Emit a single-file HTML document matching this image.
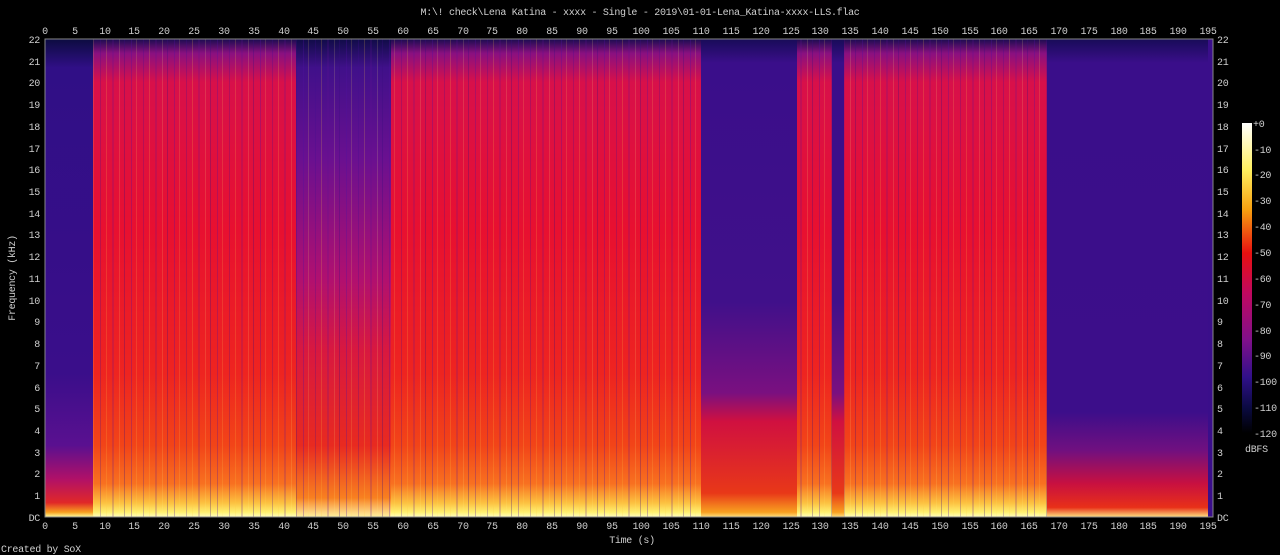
<!DOCTYPE html>
<html><head><meta charset="utf-8"><style>
html,body{margin:0;padding:0;background:#000;width:1280px;height:555px;overflow:hidden}
svg{display:block}
text{font-family:"Liberation Mono",monospace;font-size:10px;fill:#d0d0d0;letter-spacing:-0.3px}
</style></head><body>
<svg width="1280" height="555" xmlns="http://www.w3.org/2000/svg">
<defs>
<linearGradient id="loud" x1="0" y1="0" x2="0" y2="1">
<stop offset="0" stop-color="#1a0c50"/><stop offset="0.03" stop-color="#8a1080"/><stop offset="0.09" stop-color="#d8104a"/><stop offset="0.4" stop-color="#e81030"/><stop offset="0.7" stop-color="#ee2420"/><stop offset="0.85" stop-color="#f24418"/><stop offset="0.93" stop-color="#f87020"/><stop offset="0.97" stop-color="#fcc040"/><stop offset="0.99" stop-color="#fff070"/><stop offset="1" stop-color="#ffffc0"/>
</linearGradient>
<linearGradient id="quiet" x1="0" y1="0" x2="0" y2="1">
<stop offset="0" stop-color="#0c0c40"/><stop offset="0.06" stop-color="#300f86"/><stop offset="0.7" stop-color="#3a0e8a"/><stop offset="0.85" stop-color="#5a1090"/><stop offset="0.92" stop-color="#b01068"/><stop offset="0.97" stop-color="#e02828"/><stop offset="0.99" stop-color="#f8a020"/><stop offset="1" stop-color="#ffffa0"/>
</linearGradient>
<linearGradient id="mid" x1="0" y1="0" x2="0" y2="1">
<stop offset="0" stop-color="#100c48"/><stop offset="0.06" stop-color="#40108a"/><stop offset="0.25" stop-color="#6a1090"/><stop offset="0.5" stop-color="#b01070"/><stop offset="0.65" stop-color="#d81840"/><stop offset="0.85" stop-color="#e82a20"/><stop offset="0.96" stop-color="#f88020"/><stop offset="1" stop-color="#fff0a0"/>
</linearGradient>
<linearGradient id="gap" x1="0" y1="0" x2="0" y2="1">
<stop offset="0" stop-color="#180c58"/><stop offset="0.05" stop-color="#3a0e8a"/><stop offset="0.55" stop-color="#40108a"/><stop offset="0.74" stop-color="#7a1080"/><stop offset="0.8" stop-color="#d01040"/><stop offset="0.95" stop-color="#e83818"/><stop offset="0.99" stop-color="#f8a020"/><stop offset="1" stop-color="#ffe080"/>
</linearGradient>
<linearGradient id="tail" x1="0" y1="0" x2="0" y2="1">
<stop offset="0" stop-color="#180c58"/><stop offset="0.05" stop-color="#3a0e8a"/><stop offset="0.78" stop-color="#3c0e8a"/><stop offset="0.86" stop-color="#701080"/><stop offset="0.93" stop-color="#c81040"/><stop offset="0.98" stop-color="#e83018"/><stop offset="1" stop-color="#ffe080"/>
</linearGradient>
<linearGradient id="cbar" x1="0" y1="0" x2="0" y2="1">
<stop offset="0" stop-color="#ffffff"/><stop offset="0.15" stop-color="#fff060"/><stop offset="0.28" stop-color="#f8a010"/><stop offset="0.42" stop-color="#e81010"/><stop offset="0.55" stop-color="#c00860"/><stop offset="0.7" stop-color="#80108a"/><stop offset="0.82" stop-color="#30108a"/><stop offset="0.92" stop-color="#0a0a40"/><stop offset="1" stop-color="#000000"/>
</linearGradient>
<pattern id="stripes" width="43" height="478" patternUnits="userSpaceOnUse">
<rect x="2" y="0" width="1" height="478" fill="#5010a0" opacity="0.3"/>
<rect x="7" y="0" width="1" height="478" fill="#ffe060" opacity="0.15"/>
<rect x="14" y="0" width="1" height="478" fill="#400c90" opacity="0.25"/>
<rect x="20" y="0" width="1" height="478" fill="#ffd040" opacity="0.18"/>
<rect x="26" y="0" width="2" height="478" fill="#600e90" opacity="0.2"/>
<rect x="33" y="0" width="1" height="478" fill="#fff080" opacity="0.15"/>
<rect x="38" y="0" width="1" height="478" fill="#3a0c80" opacity="0.3"/>
</pattern>
</defs>
<text x="640" y="15" text-anchor="middle">M:\! check\Lena Katina - xxxx - Single - 2019\01-01-Lena_Katina-xxxx-LLS.flac</text>
<rect x="45" y="39" width="48" height="478" fill="url(#quiet)"/>
<rect x="93" y="39" width="203" height="478" fill="url(#loud)"/>
<rect x="296" y="39" width="95" height="478" fill="url(#mid)"/>
<rect x="391" y="39" width="310" height="478" fill="url(#loud)"/>
<rect x="701" y="39" width="102" height="478" fill="url(#gap)"/>
<rect x="797" y="39" width="35" height="478" fill="url(#loud)"/>
<rect x="832" y="39" width="12" height="478" fill="url(#gap)"/>
<rect x="844" y="39" width="203" height="478" fill="url(#loud)"/>
<rect x="1047" y="39" width="161" height="478" fill="url(#tail)"/>
<rect x="93" y="39" width="298" height="478" fill="url(#stripes)"/>
<rect x="391" y="39" width="310" height="478" fill="url(#stripes)"/>
<rect x="797" y="39" width="35" height="478" fill="url(#stripes)"/>
<rect x="844" y="39" width="203" height="478" fill="url(#stripes)"/>
<rect x="1208" y="39" width="5" height="478" fill="#3a0e8a"/>
<rect x="45" y="39" width="1168" height="478" fill="none" stroke="#888" stroke-width="1"/>
<g text-anchor="end">
<text x="40" y="521">DC</text><text x="40" y="499">1</text><text x="40" y="477">2</text><text x="40" y="456">3</text><text x="40" y="434">4</text><text x="40" y="412">5</text><text x="40" y="391">6</text><text x="40" y="369">7</text><text x="40" y="347">8</text><text x="40" y="325">9</text><text x="40" y="304">10</text><text x="40" y="282">11</text><text x="40" y="260">12</text><text x="40" y="238">13</text><text x="40" y="217">14</text><text x="40" y="195">15</text><text x="40" y="173">16</text><text x="40" y="152">17</text><text x="40" y="130">18</text><text x="40" y="108">19</text><text x="40" y="86">20</text><text x="40" y="65">21</text><text x="40" y="43">22</text>
</g>
<g>
<text x="1217" y="521">DC</text><text x="1217" y="499">1</text><text x="1217" y="477">2</text><text x="1217" y="456">3</text><text x="1217" y="434">4</text><text x="1217" y="412">5</text><text x="1217" y="391">6</text><text x="1217" y="369">7</text><text x="1217" y="347">8</text><text x="1217" y="325">9</text><text x="1217" y="304">10</text><text x="1217" y="282">11</text><text x="1217" y="260">12</text><text x="1217" y="238">13</text><text x="1217" y="217">14</text><text x="1217" y="195">15</text><text x="1217" y="173">16</text><text x="1217" y="152">17</text><text x="1217" y="130">18</text><text x="1217" y="108">19</text><text x="1217" y="86">20</text><text x="1217" y="65">21</text><text x="1217" y="43">22</text>
</g>
<g text-anchor="middle">
<text x="45" y="34">0</text><text x="75" y="34">5</text><text x="105" y="34">10</text><text x="134" y="34">15</text><text x="164" y="34">20</text><text x="194" y="34">25</text><text x="224" y="34">30</text><text x="254" y="34">35</text><text x="284" y="34">40</text><text x="313" y="34">45</text><text x="343" y="34">50</text><text x="373" y="34">55</text><text x="403" y="34">60</text><text x="433" y="34">65</text><text x="463" y="34">70</text><text x="492" y="34">75</text><text x="522" y="34">80</text><text x="552" y="34">85</text><text x="582" y="34">90</text><text x="612" y="34">95</text><text x="641" y="34">100</text><text x="671" y="34">105</text><text x="701" y="34">110</text><text x="731" y="34">115</text><text x="761" y="34">120</text><text x="791" y="34">125</text><text x="820" y="34">130</text><text x="850" y="34">135</text><text x="880" y="34">140</text><text x="910" y="34">145</text><text x="940" y="34">150</text><text x="970" y="34">155</text><text x="999" y="34">160</text><text x="1029" y="34">165</text><text x="1059" y="34">170</text><text x="1089" y="34">175</text><text x="1119" y="34">180</text><text x="1148" y="34">185</text><text x="1178" y="34">190</text><text x="1208" y="34">195</text>
</g>
<g text-anchor="middle">
<text x="45" y="529">0</text><text x="75" y="529">5</text><text x="105" y="529">10</text><text x="134" y="529">15</text><text x="164" y="529">20</text><text x="194" y="529">25</text><text x="224" y="529">30</text><text x="254" y="529">35</text><text x="284" y="529">40</text><text x="313" y="529">45</text><text x="343" y="529">50</text><text x="373" y="529">55</text><text x="403" y="529">60</text><text x="433" y="529">65</text><text x="463" y="529">70</text><text x="492" y="529">75</text><text x="522" y="529">80</text><text x="552" y="529">85</text><text x="582" y="529">90</text><text x="612" y="529">95</text><text x="641" y="529">100</text><text x="671" y="529">105</text><text x="701" y="529">110</text><text x="731" y="529">115</text><text x="761" y="529">120</text><text x="791" y="529">125</text><text x="820" y="529">130</text><text x="850" y="529">135</text><text x="880" y="529">140</text><text x="910" y="529">145</text><text x="940" y="529">150</text><text x="970" y="529">155</text><text x="999" y="529">160</text><text x="1029" y="529">165</text><text x="1059" y="529">170</text><text x="1089" y="529">175</text><text x="1119" y="529">180</text><text x="1148" y="529">185</text><text x="1178" y="529">190</text><text x="1208" y="529">195</text>
</g>
<text x="632" y="543" text-anchor="middle">Time (s)</text>
<text transform="translate(15,278) rotate(-90)" text-anchor="middle">Frequency (kHz)</text>
<text x="1" y="552">Created by SoX</text>
<rect x="1242" y="123" width="10" height="310" fill="url(#cbar)"/>
<g>
<text x="1253" y="127">+0</text><text x="1254" y="153">-10</text><text x="1254" y="178">-20</text><text x="1254" y="204">-30</text><text x="1254" y="230">-40</text><text x="1254" y="256">-50</text><text x="1254" y="282">-60</text><text x="1254" y="308">-70</text><text x="1254" y="334">-80</text><text x="1254" y="359">-90</text><text x="1254" y="385">-100</text><text x="1254" y="411">-110</text><text x="1254" y="437">-120</text>
</g>
<text x="1245" y="452">dBFS</text>
</svg>
</body></html>
